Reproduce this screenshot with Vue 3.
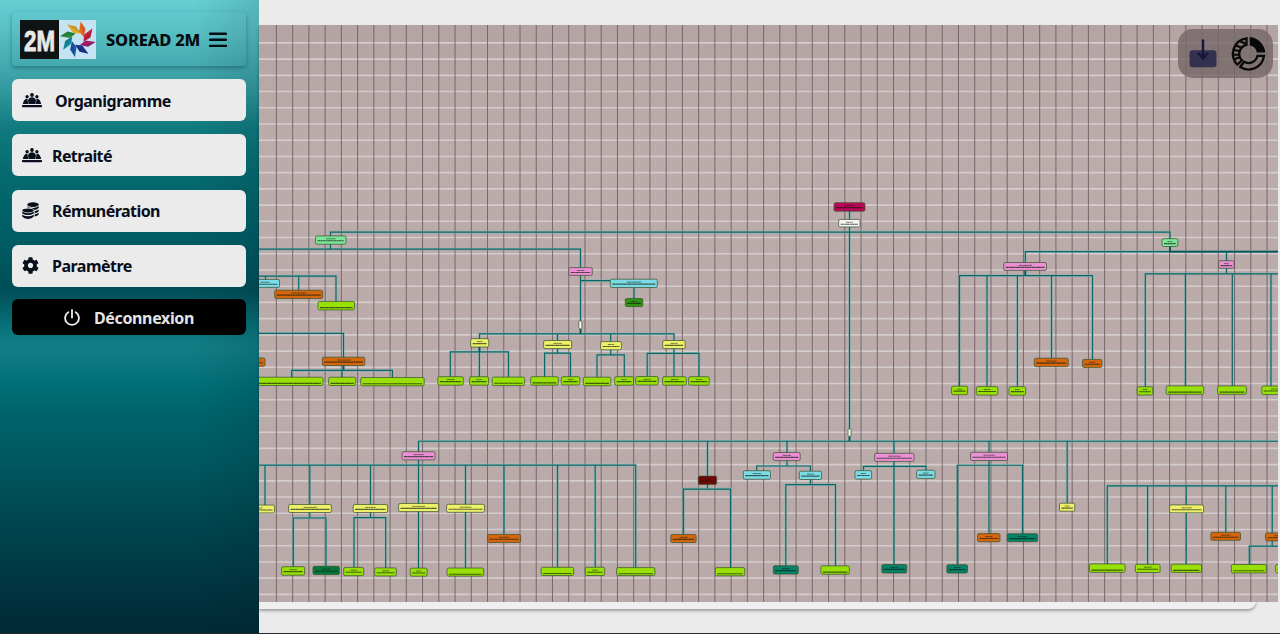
<script setup>
const menu = [
  { label: 'Organigramme', icon: 'people', cls: 'item-org' },
  { label: 'Retraité', icon: 'people', cls: 'item-ret' },
  { label: 'Rémunération', icon: 'coins', cls: 'item-rem' },
  { label: 'Paramètre', icon: 'gear', cls: 'item-par' },
]

const C = {
  lime: '#98e008', mint: '#7ee69a', pink: '#ec8fd4', cyan: '#7bdbe6', orange: '#d5660c',
  yellow: '#eef069', teal: '#058268', green: '#04783c', forest: '#2f9410', crimson: '#bf0557',
  maroon: '#760507', white: '#f5f5f5',
}

// x, y, width, height, colour
const nodes = [
  [834, 202.8, 31, 8.5, 'crimson'], [838.7, 219.5, 21.3, 7.5, 'white'],
  [315.5, 236, 30.5, 8.3, 'mint'], [250, 279.5, 29.5, 8, 'cyan'],
  [274.7, 290.3, 48, 8.3, 'orange'], [318, 301.5, 36.5, 8.5, 'lime'],
  [322.3, 357.3, 42.5, 8.3, 'orange'], [240, 358, 25, 8.3, 'orange'],
  [240, 377.3, 83, 8.3, 'lime'], [328.7, 377.3, 27, 8.3, 'lime'], [360.7, 377.6, 63.5, 8.3, 'lime'],
  [470.7, 338.8, 18, 8.3, 'yellow'], [437.8, 376.8, 25.5, 8.5, 'lime'], [469.6, 376.8, 19, 8.5, 'lime'], [492.2, 377.2, 32.4, 8.5, 'lime'],
  [568.7, 267.7, 23.6, 7.8, 'pink'], [610.3, 279.3, 47, 8.3, 'cyan'], [625.3, 298.6, 17.5, 8.1, 'forest'],
  [578.8, 320.8, 3.1, 8.2, 'white'], [543.6, 340.6, 28, 8.1, 'yellow'], [600.6, 341.7, 20.8, 8.2, 'yellow'], [662.7, 340.6, 22.5, 8.1, 'yellow'],
  [530.7, 376.8, 27.6, 8.5, 'lime'], [561.3, 376.8, 18.5, 8.3, 'lime'], [583.3, 377.3, 27.5, 8.5, 'lime'], [614.7, 376.8, 18.8, 8.5, 'lime'],
  [635.7, 376.6, 22.5, 8.5, 'lime'], [662.6, 376.8, 23.7, 8.5, 'lime'], [688.6, 376.8, 20.6, 8.5, 'lime'],
  [1003.7, 262.6, 42.8, 7.9, 'pink'], [1034.3, 358.3, 34, 8.4, 'orange'], [1082.5, 359.5, 19.5, 8, 'orange'],
  [951.6, 386.3, 16, 8.5, 'lime'], [976.3, 386.7, 21.6, 8.5, 'lime'], [1009, 386.8, 16.6, 8.5, 'lime'],
  [1162, 238.8, 15.8, 7.8, 'mint'], [1218.6, 260.8, 15.5, 7.6, 'pink'],
  [1137.3, 386.9, 15.5, 8.2, 'lime'], [1166.2, 386, 37.5, 8.4, 'lime'], [1217.6, 386, 28.8, 8.4, 'lime'], [1261.8, 386.2, 26, 8.4, 'lime'],
  [402, 451.8, 33, 8.2, 'pink'], [240, 505.2, 34.4, 7.8, 'yellow'], [288.6, 504.6, 42.8, 8, 'yellow'], [353.2, 504.6, 34.4, 8, 'yellow'],
  [398.6, 503.6, 40, 8.1, 'yellow'], [446.6, 504.4, 37.8, 8, 'yellow'], [281.6, 566.8, 23, 8.5, 'lime'], [313, 566.4, 26.4, 8.3, 'green'],
  [343.7, 567.5, 20, 8.3, 'lime'], [374.7, 568, 21.6, 8.1, 'lime'], [410.2, 568.2, 17, 8.1, 'lime'], [447, 568.1, 36.7, 8.1, 'lime'],
  [487.6, 534.5, 33, 8.1, 'orange'], [541.2, 567.4, 32.4, 8.2, 'lime'], [585.3, 567.4, 19.4, 8.2, 'lime'], [616.6, 567.7, 38.3, 8, 'lime'],
  [698.3, 476.2, 18.4, 8.3, 'maroon'], [670.8, 534.6, 25.3, 8, 'orange'], [715.3, 567.7, 29.5, 8.2, 'lime'],
  [773.2, 452.6, 27, 8.1, 'pink'], [743.3, 470.8, 27.2, 8.5, 'cyan'], [799.3, 471.3, 22.2, 8.3, 'cyan'],
  [874.6, 453.4, 39.5, 8.1, 'pink'], [855, 470.7, 16.6, 8.5, 'cyan'], [916.6, 470.3, 18.4, 8.2, 'cyan'], [970.5, 452.4, 37, 8.2, 'pink'],
  [773.3, 565.8, 25, 8.4, 'teal'], [820.9, 566, 28.5, 8.3, 'lime'], [881.8, 564.6, 25, 8.5, 'teal'], [946.8, 564.8, 20.7, 8.4, 'teal'],
  [977.5, 533.7, 22.5, 8.2, 'orange'], [1007.1, 533.8, 30.6, 8, 'teal'], [1059.5, 503.3, 15.2, 8, 'yellow'],
  [1169.6, 505, 34, 7.9, 'yellow'], [1210.8, 532.4, 29.7, 8, 'orange'], [1265.5, 533, 25, 8, 'orange'],
  [1089.4, 564, 35.7, 8.4, 'lime'], [1135.4, 564.4, 24.7, 8.2, 'lime'], [1171.2, 564.3, 30.3, 8.2, 'lime'], [1231.3, 564.6, 35, 8.4, 'lime'], [1275.6, 564.6, 20, 8.4, 'lime'],
  [848, 428.8, 3.1, 7.7, 'white'],
].map(([x, y, w, h, c], i) => ({ x, y: y + 0.3, w, h, fill: C[c], key: i, lower: c === 'lime' && w > 26 }))

const links = [
  'M849.5 210V441.5', 'M330.5 240V232.5H1170V242',
  'M330.5 243V249.5M250 249.5H580.5V334', 'M250 276.5H336V303M265.5 276V281M298.7 276V291',
  'M250 333.7H343.5V370.5M291.7 379V370.8H392.4V379M342 370V379',
  'M479.5 341V334.3H674V342M557.5 334V342M610.7 334V343M580.5 281H612M634 287V299',
  'M450.3 378V352.3H508.5V378M479.4 345V378',
  'M544.6 378V353.5H570.5V378M557.5 348V353M597 378V355.3H624.3V378M610.7 349V355',
  'M647.2 378V353.7H699V378M674 348V378',
  'M1170 245V252M1025.3 264V252H1278M1226.5 252V274',
  'M959.5 387V276H1092.5V360M1025.3 270V276M987 276V387M1017.4 276V387M1051.5 276V359',
  'M1145.3 388V274.2H1278M1185.4 274V387M1232.3 274V387M1271 274V387',
  'M418.5 453V441.6H1278M707.5 441V489M787 441V466M894 441V565M989 441V534M1067.2 441V504',
  'M250 465.5H635.7V568M418.5 459V569M265 465V506M309.8 465V518M370.5 465V518M465.5 465V569M504 465V535M557.5 465V568M595.2 465V568',
  'M293.3 568V518.4H326V567M354 568V518H385.7V569',
  'M683.5 535V489.5H730.5V568', 'M756.7 471V466.4H810.4V485M785.8 567V485H835.5V567',
  'M863.5 471V466.8H926V471', 'M957.3 565V465.6H1022.5V534',
  'M1107.3 565V486.3H1278M1147.6 486V565M1186.2 486V565M1225.8 486V533M1272.2 486V546.5M1249.3 565V546.6H1278',
]

const petalColours = ['#e8a820', '#ed6719', '#c81f38', '#a61c67', '#1d3285', '#1757a8', '#168b9a', '#288b35']
</script>

<template>
  <div class="page">
    <aside class="sidebar">
      <header class="brand">
        <svg class="logo" width="76" height="39" viewBox="0 0 76 39">
          <rect width="39" height="39" fill="#101314" />
          <rect x="39" width="37" height="39" fill="#c4e4f4" />
          <text x="4" y="30.5" textLength="31" lengthAdjust="spacingAndGlyphs" class="logo-text">2M</text>
          <g transform="translate(57.8 19.2)">
            <g v-for="(c, i) in petalColours" :key="c" :transform="`rotate(${i * 45})`">
              <path d="M2.6 -5.6L-4.6 -6.4L-10.6 -14.6L-1.8 -12.6Z" :fill="c" />
              <path d="M2.6 -5.6L-10.6 -14.6L-1.8 -12.6Z" fill="#111a50" opacity=".14" />
            </g>
          </g>
        </svg>
        <span class="brand-name">SOREAD 2M</span>
        <svg class="burger" width="18" height="16" viewBox="0 0 18 16"><path d="M1 1.7H17M1 7.8H17M1 13.9H17" /></svg>
      </header>

      <nav class="menu">
        <a v-for="m in menu" :key="m.label" class="item" :class="m.cls">
          <svg v-if="m.icon === 'people'" class="icon" width="20" height="15" viewBox="0 0 20 15">
            <circle cx="10" cy="2" r="1.9" /><circle cx="5.1" cy="3.7" r="1.7" /><circle cx="14.9" cy="3.7" r="1.7" />
            <path d="M6.6 11L6 7.500Q7.200 4.200 10 4.200T14 7.500L13.400 11ZM.8 11C1.500 7.500 3 5.700 5.400 5.700L6.200 11ZM19.200 11C18.500 7.500 17 5.700 14.600 5.700L13.800 11Z" />
            <rect y="12" width="20" height="2.3" rx=".7" />
          </svg>
          <svg v-else-if="m.icon === 'coins'" class="icon" width="17" height="17" viewBox="0 0 17 17">
            <ellipse cx="11" cy="2.6" rx="5.8" ry="2.3" />
            <path d="M5.2 4.2Q8 6 11 6T16.8 4.2V5.8Q15.5 7.8 12.4 8.1Q10.7 5.9 6.1 5.6Q5.2 5.3 5.2 4.2ZM12.7 9.1Q15.6 8.7 16.8 7.5V9Q16 10.8 12.7 11.3ZM12.7 12.3Q15.5 12 16.8 10.7V12.2Q15.8 14 12.7 14.5Z" />
            <ellipse cx="6" cy="8.4" rx="5.8" ry="2" />
            <path d="M.2 9.8Q6 12.6 11.8 9.8V11.4Q6 14.5.2 11.4ZM.2 12.7Q6 15.7 11.8 12.7V14.6Q10 17 6 17T.2 14.6Z" />
          </svg>
          <svg v-else class="icon" width="17" height="17" viewBox="0 0 512 512">
            <path d="M487.4 315.7l-42.6-24.6c4.3-23.2 4.3-47 0-70.2l42.6-24.6c4.9-2.8 7.1-8.6 5.5-14-11.1-35.6-30-67.8-54.7-94.6-3.8-4.1-10-5.1-14.8-2.3L380.8 110c-17.9-15.4-38.5-27.3-60.8-35.1V25.8c0-5.6-3.9-10.5-9.4-11.7-36.7-8.2-74.3-7.8-109.2 0-5.5 1.2-9.4 6.1-9.4 11.7V75c-22.2 7.9-42.8 19.8-60.8 35.1L88.7 85.5c-4.9-2.8-11-1.9-14.8 2.3-24.7 26.7-43.6 58.9-54.7 94.6-1.7 5.4.6 11.2 5.5 14L67.3 221c-4.3 23.2-4.3 47 0 70.2l-42.6 24.6c-4.9 2.8-7.1 8.6-5.5 14 11.1 35.6 30 67.8 54.7 94.6 3.8 4.1 10 5.1 14.8 2.3l42.6-24.6c17.9 15.4 38.5 27.3 60.8 35.1v49.2c0 5.6 3.9 10.5 9.4 11.7 36.7 8.2 74.3 7.8 109.2 0 5.5-1.2 9.4-6.1 9.4-11.7v-49.2c22.2-7.9 42.8-19.8 60.8-35.1l42.6 24.6c4.9 2.8 11 1.9 14.8-2.3 24.7-26.7 43.6-58.9 54.7-94.6 1.5-5.5-.7-11.3-5.6-14.1zM256 336c-44.1 0-80-35.9-80-80s35.9-80 80-80 80 35.9 80 80-35.9 80-80 80z" />
          </svg>
          <span>{{ m.label }}</span>
        </a>
      </nav>

      <button class="logout">
        <svg width="16" height="17" viewBox="0 0 16 17"><path d="M4.3 3.2A6.9 6.9 0 1 0 11.7 3.2M8 1V8.5" /></svg>
        <span>Déconnexion</span>
      </button>
    </aside>

    <main class="main">
      <div class="card">
        <svg class="chart" width="1019" height="577" viewBox="259 25.4 1019 577">
          <defs>
            <pattern id="fine" x="276.4" y="43.3" width="3.247" height="3.247" patternUnits="userSpaceOnUse">
              <path d="M0 0V3.25" stroke="#a29193" stroke-width=".7" opacity=".32" />
            </pattern>
            <linearGradient id="shade" x2="0" y2="1"><stop stop-color="#b4a4a4" /><stop offset=".2" stop-color="#bcacac" /><stop offset="1" stop-color="#baaaaa" /></linearGradient>
          </defs>
          <rect x="259" y="25" width="1019" height="578" fill="url(#shade)" />
          <rect x="259" y="25" width="1019" height="578" fill="url(#fine)" />
          <path v-for="i in 35" :key="'h' + i" :d="`M259 ${43.3 + (i - 1) * 16.22}H1278`" class="grid-h" />
          <path v-for="i in 62" :key="'v' + i" :d="`M${276.4 + (i - 1) * 16.24} 25V603`" class="grid-v" />
          <g fill="none">
            <path v-for="(d, i) in links" :key="'a' + i" :d="d" class="halo" />
            <path v-for="(d, i) in links" :key="'b' + i" :d="d" class="link" />
          </g>
          <path class="trunk" d="M580.5 328V334M849.5 436V441.5M1170 247V252H1278M1025.3 270V276M479.5 346V352M343.5 365V370" />
          <g v-for="n in nodes" :key="n.key">
            <rect :x="n.x" :y="n.y" :width="n.w" :height="n.h" rx="1.5" :fill="n.fill" class="node" />
            <template v-if="n.w > 5">
              <path v-if="!n.lower" class="caption" :d="`M${n.x + n.w * 0.35} ${n.y + 2.9}H${n.x + n.w * 0.66}`" />
              <path class="caption strong" :d="`M${n.x + 2} ${n.y + (n.lower ? 6.2 : 4.9)}H${n.x + n.w - 2}`" />
            </template>
          </g>
        </svg>
      </div>

      <div class="tools">
        <svg width="94" height="49" viewBox="0 0 94 49">
          <rect x="11.5" y="21.300" width="27" height="17" rx="3" fill="#34314f" />
          <path d="M25 10.500V29M20 24L25 29.200L30 24" fill="none" stroke="#17153f" stroke-width="2.400" />
          <g transform="translate(70.500 24.800)">
            <path d="M1.2 -16.7A16.7 16.7 0 0 1 16.7 -1.2H8.3A8.4 8.4 0 0 0 1.2 -8.3Z" fill="#080808" />
            <path d="M15.5 2A15.6 15.6 0 0 1 -8.3 13.2L-4.6 8A9.2 9.2 0 0 0 9 2Z" fill="none" stroke="#080808" stroke-width="2.3" />
            <path d="M-2 -15.5A15.6 15.6 0 0 0 -11.1 10.9L-6.6 6.4A9.2 9.2 0 0 1 -2 -9Z" fill="none" stroke="#080808" stroke-width="2.3" />
            <path d="M-9.5 -13L-3 -10M-13 -8.5L-7 -6M-15 -4L-8.5 -2.5M-15.5 1H-9M-14.5 5.5L-8.5 3.5" stroke="#080808" stroke-width="2.1" />
          </g>
        </svg>
      </div>
    </main>
  </div>
</template>

<style>
body { margin: 0; overflow: hidden; background: #ebebeb; }
</style>

<style scoped>
.page { display: flex; width: 1280px; height: 634px; background: #ebebeb; font-family: "Noto Sans", "Open Sans", sans-serif; overflow: hidden; position: relative; }
.page::after { content: ""; position: absolute; left: 0; right: 0; bottom: 0; height: 1px; background: #25282d; }
.sidebar {
  box-sizing: border-box; flex: 0 0 259px; height: 634px; padding: 12px 13px 0 12px; display: flex; flex-direction: column;
  background:
    linear-gradient(90deg, transparent 75%, rgba(0, 25, 35, .12)),
    linear-gradient(180deg, #65cfd2 0, #59c0c4 30px, #45aaaf 65px, #2e959a 95px, #117b7f 127px, #066a6f 175px, #00646a 205px, #005b62 245px, #004e57 290px, #087078 325px, #127d84 345px, #0b777f 365px, #006f76 385px, #00636a 415px, #00575e 465px, #00454e 525px, #003440 590px, #002936 634px);
}
.brand { box-sizing: border-box; height: 54px; flex: none; display: flex; align-items: center; padding: 1px 0 0 8px; border-radius: 3px; box-shadow: 0 2px 4px rgba(0, 55, 65, .42); }
.logo { flex: none; }
.logo-text { font: 700 30px "Liberation Sans", sans-serif; fill: #e9e9e5; stroke: #e9e9e5; stroke-width: .9; }
.brand-name { margin-left: 10px; width: 94px; white-space: nowrap; font-size: 16.5px; font-weight: 800; letter-spacing: -.2px; color: #050b10; }
.burger { margin-left: 9px; }
.burger path { stroke: #050b10; stroke-width: 2.4; stroke-linecap: round; }
.menu { display: flex; flex-direction: column; gap: 13.3px; margin-top: 13px; }
.item { box-sizing: border-box; height: 42px; display: flex; align-items: center; padding-left: 10px; border-radius: 6px; background: #ebebeb; color: #080e1c; font-size: 16px; font-weight: 700; white-space: nowrap; letter-spacing: -.5px; }
.icon { flex: none; fill: #080e1c; }
.item span { padding-top: 1px; margin-left: 10px; }
.item-org span { margin-left: 13px; }
.item-ret { letter-spacing: -.6px; }
.item-rem span, .item-par span { margin-left: 13px; }
.item-rem { letter-spacing: -.55px; }
.logout { box-sizing: border-box; flex: none; height: 36px; margin-top: 12.5px; border: 0; border-radius: 6px; background: #000; display: flex; align-items: center; justify-content: center; gap: 14px; font: 700 16px "Noto Sans", sans-serif; letter-spacing: -.35px; color: #e4e4e4; }
.logout span { padding-top: 1px; }
.logout path { fill: none; stroke: #ebebeb; stroke-width: 1.8; stroke-linecap: round; }
.main { position: relative; flex: 1; min-width: 0; padding-top: 25.4px; }
.card { width: 997px; height: 583.5px; border-radius: 0 0 8px 0; background: #efefef; box-shadow: 0 2px 3px rgba(0, 0, 0, .32); }
.chart { display: block; overflow: hidden; }
.grid-h { stroke: #d5cccc; stroke-width: 1.6; }
.grid-v { stroke: #66585b; stroke-width: 1; opacity: .8; }
.halo { stroke: #7bb8b4; stroke-width: 2.6; opacity: .55; }
.link { stroke: #0a6766; stroke-width: 1.15; }
.trunk { fill: none; stroke: #075457; stroke-width: 1.8; }
.node { stroke: #35512b; stroke-width: .7; }
.caption { stroke: #111d12; stroke-width: .9; stroke-dasharray: 3.1 .2 1.7 .2; opacity: .6; }
.strong { stroke-width: 1.1; opacity: .7; }
.tools { position: absolute; top: 29px; right: 7px; width: 95px; height: 49px; border-radius: 15px; background: rgba(119, 105, 105, .83); }
.tools svg { display: block; }
</style>
